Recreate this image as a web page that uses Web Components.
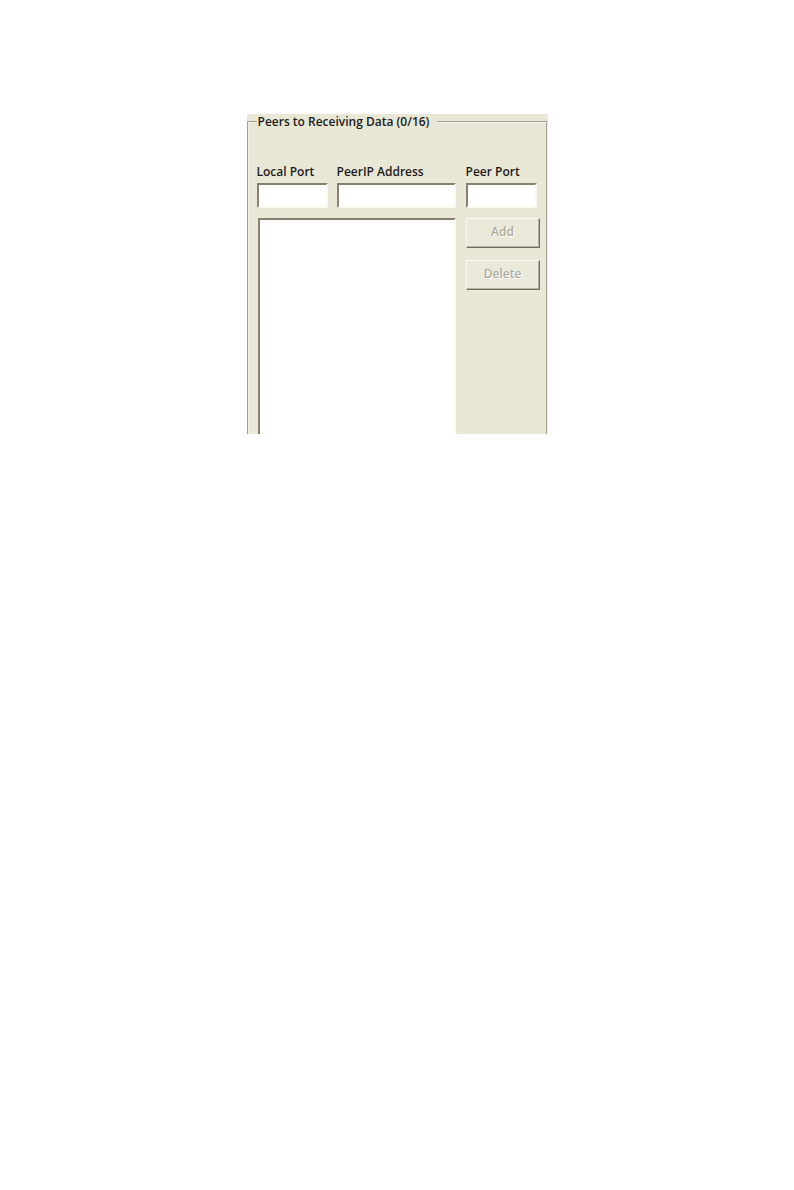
<!DOCTYPE html>
<html lang="en">
<head>
<meta charset="utf-8">
<title>Peers to Receiving Data</title>
<style>
  body {
    margin: 0;
    padding: 114px 16px 32px;
    background: #fff;
    color: #1c1b1a;
    font: 600 12px/16px "Open Sans", "Noto Sans", sans-serif;
    --face: #e9e8d7;
    --shadow: #85806f;
    --light: #fbfaf1;
  }
</style>
</head>
<body>
<peer-panel>
  <group-box caption="Peers to Receiving Data (0/16)">
    <peer-form></peer-form>
  </group-box>
</peer-panel>

<script>
class PeerPanel extends HTMLElement {
  constructor() {
    super();
    this.attachShadow({mode: 'open'}).innerHTML = `
      <style>
        :host { display: block; box-sizing: border-box; max-width: 301px; margin: 0 auto; background: var(--face); }
      </style>
      <slot></slot>
    `;
  }
}
customElements.define('peer-panel', PeerPanel);

class GroupBox extends HTMLElement {
  constructor() {
    super();
    this.attachShadow({mode: 'open'}).innerHTML = `
      <style>
        :host { display: block; }
        fieldset { margin: 0; padding: 34px 6px 0 8px; min-width: 0; border: 2px groove #f4f2e6; border-bottom: 0; }
        legend { padding: 0 8px 0 1px; }
      </style>
      <fieldset>
        <legend>${this.getAttribute('caption')}</legend>
        <slot></slot>
      </fieldset>
    `;
  }
}
customElements.define('group-box', GroupBox);

class PeerField extends HTMLElement {
  constructor() {
    super();
    this.attachShadow({mode: 'open'}).innerHTML = `
      <style>
        :host { display: block; min-width: 0; }
        label { display: block; margin-bottom: 3px; white-space: nowrap; }
        input {
          display: block; box-sizing: border-box; width: 100%; height: 25px; padding: 2px 4px;
          border: 2px solid; border-color: var(--shadow) var(--light) var(--light) var(--shadow);
          border-radius: 0; outline: 0; background: #fff; color: inherit; font: inherit;
        }
      </style>
      <label for="field">${this.getAttribute('label')}</label>
      <input id="field" type="text">
    `;
  }
}
customElements.define('peer-field', PeerField);

class PeerList extends HTMLElement {
  constructor() {
    super();
    this.attachShadow({mode: 'open'}).innerHTML = `
      <style>
        :host { display: block; min-width: 0; }
        select {
          display: block; box-sizing: border-box; width: 100%; height: 216px; padding: 2px;
          border: 2px solid; border-color: var(--shadow) var(--light) transparent var(--shadow);
          border-bottom: 0; border-radius: 0; outline: 0; background: #fff; font: inherit;
        }
      </style>
      <select multiple aria-label="Peers"></select>
    `;
  }
}
customElements.define('peer-list', PeerList);

class PeerButton extends HTMLElement {
  constructor() {
    super();
    this.attachShadow({mode: 'open'}).innerHTML = `
      <style>
        :host { display: block; }
        button {
          display: block; box-sizing: border-box; width: 100%; height: 30px; padding: 0 0 2px;
          border: 1px solid; border-color: var(--light) #716d5f #716d5f var(--light);
          border-radius: 0; box-shadow: inset -1px -1px #b5b09f;
          background: #ebe9da; color: #aeab9d; text-shadow: 1px 1px #fff; font: inherit;
        }
      </style>
      <button type="button" disabled><slot></slot></button>
    `;
  }
}
customElements.define('peer-button', PeerButton);

class PeerForm extends HTMLElement {
  constructor() {
    super();
    this.attachShadow({mode: 'open'}).innerHTML = `
      <style>
        :host { display: grid; grid-template-columns: 71px minmax(0, 1fr) 75px; column-gap: 9px; row-gap: 10px; }
        peer-field:last-of-type { margin: 0 3px 0 1px; }
        peer-list { grid-column: 1 / 3; margin-left: 1px; }
        .actions { display: flex; flex-direction: column; gap: 12px; margin-left: 1px; }
      </style>
      <peer-field label="Local Port"></peer-field>
      <peer-field label="PeerIP Address"></peer-field>
      <peer-field label="Peer Port"></peer-field>
      <peer-list></peer-list>
      <div class="actions">
        <peer-button>Add</peer-button>
        <peer-button>Delete</peer-button>
      </div>
    `;
  }
}
customElements.define('peer-form', PeerForm);
</script>
</body>
</html>
